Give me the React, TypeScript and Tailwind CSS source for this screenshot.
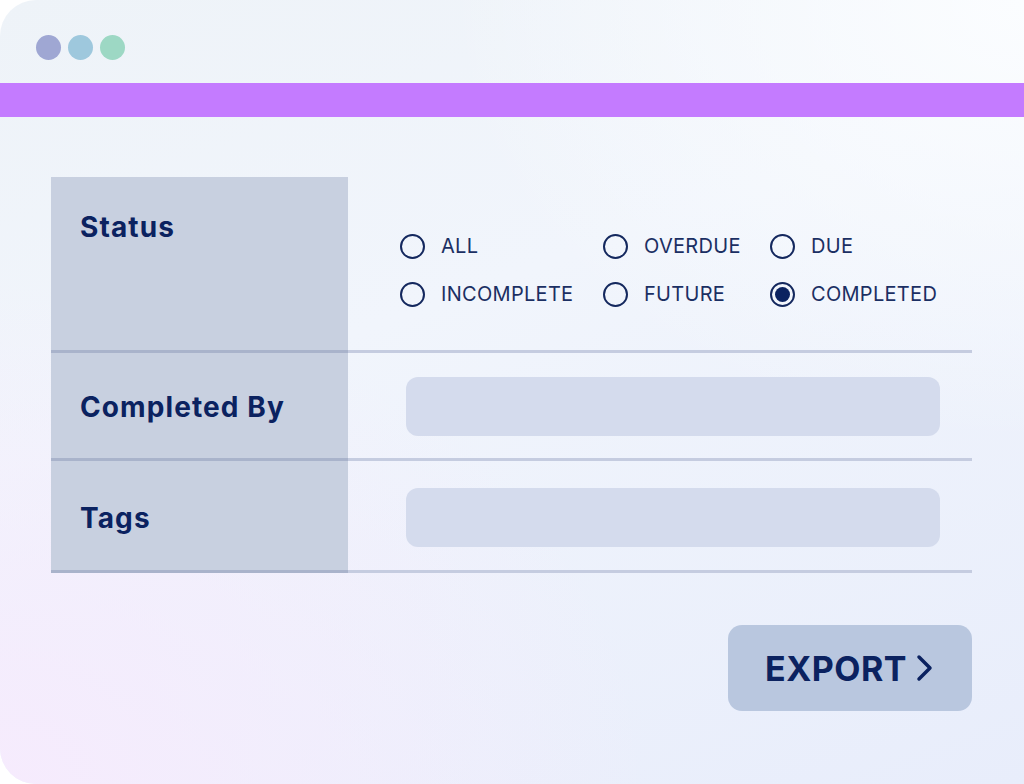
import React from 'react';

const options = [
  ['ALL', 'OVERDUE', 'DUE'],
  ['INCOMPLETE', 'FUTURE', 'COMPLETED'],
];

const Radio: React.FC<{ label: string; checked?: boolean; width: string }> = ({ label, checked, width }) => (
  <div className={`flex items-center gap-[16px] ${width}`}>
    <span className="w-[25px] h-[25px] rounded-full border-[2px] border-[#14285e] flex items-center justify-center shrink-0">
      {checked && <span className="w-[15px] h-[15px] rounded-full bg-[#0b2260]" />}
    </span>
    <span className="text-[20px] text-[#1b2f63] tracking-[0.3px]">{label}</span>
  </div>
);

const rows = [
  { label: 'Completed By', h: 'h-[108px]', pt: 'pt-[2px]' },
  { label: 'Tags', h: 'h-[112px]', pt: 'pt-[4px]' },
];

const App: React.FC = () => {
  return (
    <div className="w-[1024px] h-[784px] bg-white overflow-hidden" style={{ fontFamily: 'Inter, "Open Sans", sans-serif' }}>
      <div className="h-full rounded-l-[36px] overflow-hidden bg-[linear-gradient(160deg,#eef3f8_0%,#f1f5fc_40%,#e8edfb_100%)] relative">
        <div className="absolute inset-0 bg-[radial-gradient(ellipse_at_0%_100%,#f6ebfd_0%,rgba(246,235,253,0)_45%)]" />
        <div className="absolute inset-0 bg-[radial-gradient(ellipse_at_100%_0%,#fbfdff_0%,rgba(251,253,255,0)_40%)]" />
        <div className="relative">
          <div className="h-[83px] flex items-center gap-[7px] pl-[36px] pt-[11px]">
            <span className="w-[25px] h-[25px] rounded-full bg-[#9fa7d3]" />
            <span className="w-[25px] h-[25px] rounded-full bg-[#9ec8dd]" />
            <span className="w-[25px] h-[25px] rounded-full bg-[#9dd8c4]" />
          </div>
          <div className="h-[34px] bg-[#c47bff]" />
          <div className="pl-[51px] pt-[60px] w-[972px]">
            <div className="flex border-b-[3px] border-[#c5cce0]">
              <div className="w-[297px] h-[176px] bg-[#c8d0e0] pl-[29px] pt-[29px] border-b-[3px] border-[#a9b3cb] -mb-[3px]">
                <span className="text-[28px] font-bold text-[#0b2260] tracking-[1.1px]">Status</span>
              </div>
              <div className="flex-1 pl-[52px] pt-[54px] flex flex-col gap-[18px]">
                {options.map((row, i) => (
                  <div key={i} className="flex">
                    {row.map((o, j) => (
                      <Radio
                        key={o}
                        label={o}
                        checked={o === 'COMPLETED'}
                        width={j === 0 ? 'w-[203px]' : j === 1 ? 'w-[167px]' : ''}
                      />
                    ))}
                  </div>
                ))}
              </div>
            </div>
            {rows.map((r) => (
              <div key={r.label} className="flex border-b-[3px] border-[#c5cce0]">
                <div className={`w-[297px] ${r.h} ${r.pt} bg-[#c8d0e0] pl-[29px] flex items-center border-b-[3px] border-[#a9b3cb] -mb-[3px]`}>
                  <span className="text-[28px] font-bold text-[#0b2260] tracking-[1.1px]">{r.label}</span>
                </div>
                <div className={`flex-1 pl-[58px] pr-[32px] ${r.pt} flex items-center`}>
                  <div className="w-full h-[59px] rounded-[12px] bg-[#d4dbed]" />
                </div>
              </div>
            ))}
            <div className="flex justify-end pt-[52px]">
              <div className="w-[244px] h-[86px] rounded-[14px] bg-[#b9c7df] flex items-center justify-center gap-[8px]">
                <span className="text-[34px] font-bold text-[#0b2260] tracking-[0.5px]">EXPORT</span>
                <svg width="20" height="30" viewBox="0 0 20 30" fill="none">
                  <path d="M4 4l11 11-11 11" stroke="#0b2260" strokeWidth="3.5" strokeLinecap="round" strokeLinejoin="round" />
                </svg>
              </div>
            </div>
          </div>
        </div>
      </div>
    </div>
  );
};

export default App;
